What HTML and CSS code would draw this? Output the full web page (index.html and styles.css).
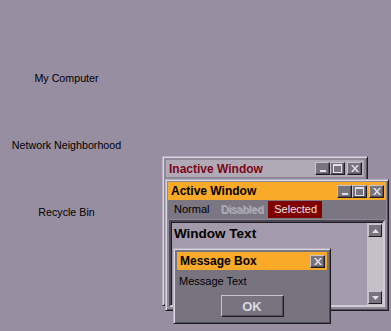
FILE: index.html
```html
<!DOCTYPE html>
<html lang="en"><head><meta charset="UTF-8">
  <title>Appearance Preview</title>
  <link rel="stylesheet" href="styles.css">
</head>
<body>
  <div class="desktop">
    <div class="icons">
      <div class="icon"><span>My Computer</span></div>
      <div class="icon"><span>Network Neighborhood</span></div>
      <div class="icon"><span>Recycle Bin</span></div>
    </div>

    <div class="window inactive-win">
      <div class="titlebar inactive">
        <span class="title">Inactive Window</span>
        <div class="caps">
          <div class="cap"><svg width="8" height="7" viewBox="0 0 8 7"><rect x="1" y="5" width="6" height="2" fill="#e4e0e8"/></svg></div>
          <div class="cap"><svg width="9" height="9" viewBox="0 0 9 9"><rect x="0.5" y="0.5" width="8" height="8" fill="none" stroke="#e4e0e8"/><rect x="0" y="0" width="9" height="2" fill="#e4e0e8"/></svg></div>
          <div class="cap close"><svg width="8" height="7" viewBox="0 0 8 7"><path d="M0 0h2l2 2.5 2-2.5h2l-3 3.5 3 3.5h-2l-2-2.5-2 2.5h-2l3-3.5z" fill="#e4e0e8"/></svg></div>
        </div>
      </div>
    </div>

    <div class="window active-win">
      <div class="titlebar active">
        <span class="title">Active Window</span>
        <div class="caps">
          <div class="cap"><svg width="8" height="7" viewBox="0 0 8 7"><rect x="1" y="5" width="6" height="2" fill="#e4e0e8"/></svg></div>
          <div class="cap"><svg width="9" height="9" viewBox="0 0 9 9"><rect x="0.5" y="0.5" width="8" height="8" fill="none" stroke="#e4e0e8"/><rect x="0" y="0" width="9" height="2" fill="#e4e0e8"/></svg></div>
          <div class="cap close"><svg width="8" height="7" viewBox="0 0 8 7"><path d="M0 0h2l2 2.5 2-2.5h2l-3 3.5 3 3.5h-2l-2-2.5-2 2.5h-2l3-3.5z" fill="#e4e0e8"/></svg></div>
        </div>
      </div>
      <div class="menubar">
        <span class="item">Normal</span>
        <span class="item disabled">Disabled</span>
        <span class="item selected">Selected</span>
      </div>
      <div class="client">
        <div class="client-text">Window Text</div>
        <div class="scrollbar">
          <div class="sbtn"><svg width="7" height="4" viewBox="0 0 7 4"><path d="M3.5 0L7 4H0z" fill="#e4e0e8"/></svg></div>
          <div class="track"></div>
          <div class="sbtn"><svg width="7" height="4" viewBox="0 0 7 4"><path d="M0 0h7L3.5 4z" fill="#e4e0e8"/></svg></div>
        </div>
      </div>
    </div>

    <div class="window msgbox">
      <div class="titlebar active">
        <span class="title">Message Box</span>
        <div class="caps">
          <div class="cap close"><svg width="8" height="7" viewBox="0 0 8 7"><path d="M0 0h2l2 2.5 2-2.5h2l-3 3.5 3 3.5h-2l-2-2.5-2 2.5h-2l3-3.5z" fill="#e4e0e8"/></svg></div>
        </div>
      </div>
      <div class="msg-text">Message Text</div>
      <div class="msg-actions">
        <div class="ok-btn">OK</div>
      </div>
    </div>
  </div>
</body></html>
```

FILE: styles.css
```css
body {
  margin: 0;
  background-color: #978ea2;
  font-family: "Liberation Sans", Arial, sans-serif;
  font-size: 11px;
  color: #000;
  overflow: hidden;
}
.desktop {
  position: relative;
  width: 391px;
  height: 331px;
}
.icons {
  display: flex;
  flex-direction: column;
  width: 133px;
  padding-top: 18px;
}
.icon {
  height: 67px;
  display: flex;
  flex-direction: column;
  justify-content: flex-end;
  align-items: center;
  line-height: 13px;
  font-size: 10.7px;
}

/* windows */
.window {
  position: absolute;
  box-sizing: border-box;
  background-color: #8f8898;
  border: 1px solid;
  border-color: #b6b0be #1e1c22 #1e1c22 #b6b0be;
  box-shadow: inset 1px 1px #dcd8e2, inset -1px -1px #55515c;
  padding: 3px;
  display: flex;
  flex-direction: column;
}
.inactive-win {
  left: 162px;
  top: 156px;
  width: 206px;
  height: 150px;
}
.active-win {
  left: 165px;
  top: 179px;
  width: 224px;
  height: 132px;
  padding: 2px 2px 3px 2px;
}
.msgbox {
  left: 173px;
  top: 248px;
  width: 158px;
  height: 76px;
  background-color: #78747f;
  padding: 3px 3px 2px 3px;
}

.titlebar {
  height: 18px;
  flex: none;
  display: flex;
  align-items: center;
  justify-content: space-between;
  padding: 0 2px 0 3px;
  font-weight: bold;
  font-size: 12px;
}
.titlebar.inactive {
  height: 17px;
  background-color: #b0aab6;
  color: #7c0618;
}
.titlebar.active {
  background-color: #f8aa28;
  color: #000;
}
.caps {
  display: flex;
}
.cap {
  box-sizing: border-box;
  width: 15px;
  height: 13px;
  background-color: #78747f;
  border: 1px solid;
  border-color: #c8c4ce #1e1c22 #1e1c22 #c8c4ce;
  box-shadow: inset -1px -1px #55515c;
  display: flex;
  align-items: center;
  justify-content: center;
}
.cap.close {
  margin-left: 2px;
}

.menubar {
  height: 19px;
  flex: none;
  display: flex;
  align-items: center;
  background-color: #7a7682;
}
.item {
  padding: 2px 5px 2px 6px;
  line-height: 13px;
}
.item.disabled {
  color: #aca8b2;
  text-shadow: 1px 1px #b8b4be;
}
.item.selected {
  background-color: #800000;
  color: #e8e4ec;
}

.client {
  flex: 1;
  margin: 1px 1px 0 1px;
  display: flex;
  border: 2px solid;
  border-color: #4a4652 #d0ccd6 #d0ccd6 #4a4652;
  box-shadow: inset 1px 1px #1e1c22;
}
.client-text {
  flex: 1;
  background-color: #a39bab;
  font-size: 13.5px;
  font-weight: bold;
  padding: 3px 0 0 2px;
  margin: 1px 0 0 1px;
}
.scrollbar {
  width: 16px;
  display: flex;
  flex-direction: column;
  background-color: #c4c0c8;
  margin-top: 1px;
}
.sbtn {
  box-sizing: border-box;
  width: 14px;
  height: 13px;
  margin: 1px;
  background-color: #78747f;
  border: 1px solid;
  border-color: #c8c4ce #1e1c22 #1e1c22 #c8c4ce;
  display: flex;
  align-items: center;
  justify-content: center;
}
.track {
  flex: 1;
}

.msg-text {
  padding: 5px 0 0 2px;
  line-height: 13px;
}
.msg-actions {
  display: flex;
  justify-content: center;
  padding-top: 7px;
}
.ok-btn {
  box-sizing: border-box;
  width: 63px;
  height: 22px;
  border: 1px solid;
  border-color: #c8c4ce #1e1c22 #1e1c22 #c8c4ce;
  box-shadow: inset -1px -1px #55515c;
  display: flex;
  align-items: center;
  justify-content: center;
  color: #dcd8e0;
  font-weight: bold;
  font-size: 13px;
}
```
